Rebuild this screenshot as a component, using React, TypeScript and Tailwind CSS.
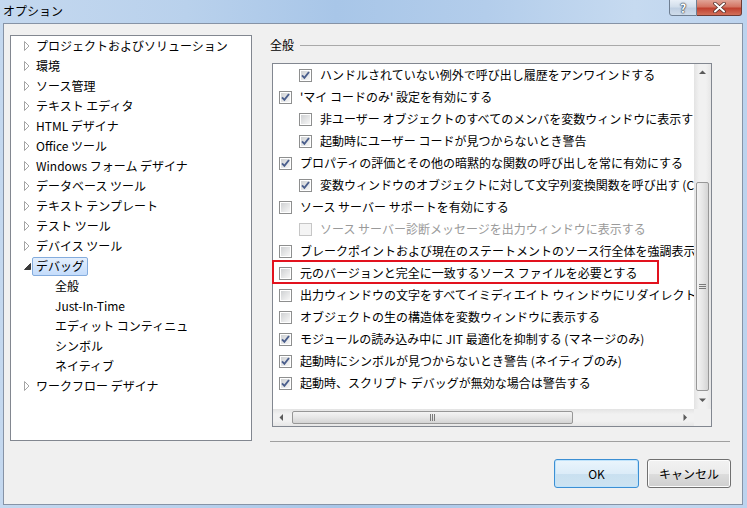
import React from 'react';

type Row = { level: number; checked: boolean; disabled?: boolean; text: string };

const rows: Row[] = [
  { level: 1, checked: true, text: 'ハンドルされていない例外で呼び出し履歴をアンワインドする' },
  { level: 0, checked: true, text: "'マイ コードのみ' 設定を有効にする" },
  { level: 1, checked: false, text: '非ユーザー オブジェクトのすべてのメンバを変数ウィンドウに表示する' },
  { level: 1, checked: true, text: '起動時にユーザー コードが見つからないとき警告' },
  { level: 0, checked: true, text: 'プロパティの評価とその他の暗黙的な関数の呼び出しを常に有効にする' },
  { level: 1, checked: true, text: '変数ウィンドウのオブジェクトに対して文字列変換関数を呼び出す (C# および JavaScript のみ)' },
  { level: 0, checked: false, text: 'ソース サーバー サポートを有効にする' },
  { level: 1, checked: false, disabled: true, text: 'ソース サーバー診断メッセージを出力ウィンドウに表示する' },
  { level: 0, checked: false, text: 'ブレークポイントおよび現在のステートメントのソース行全体を強調表示する' },
  { level: 0, checked: false, text: '元のバージョンと完全に一致するソース ファイルを必要とする' },
  { level: 0, checked: false, text: '出力ウィンドウの文字をすべてイミディエイト ウィンドウにリダイレクトする' },
  { level: 0, checked: false, text: 'オブジェクトの生の構造体を変数ウィンドウに表示する' },
  { level: 0, checked: true, text: 'モジュールの読み込み中に JIT 最適化を抑制する (マネージのみ)' },
  { level: 0, checked: true, text: '起動時にシンボルが見つからないとき警告 (ネイティブのみ)' },
  { level: 0, checked: true, text: '起動時、スクリプト デバッグが無効な場合は警告する' },
];

const topItems = [
  'プロジェクトおよびソリューション',
  '環境',
  'ソース管理',
  'テキスト エディタ',
  'HTML デザイナ',
  'Office ツール',
  'Windows フォーム デザイナ',
  'データベース ツール',
  'テキスト テンプレート',
  'テスト ツール',
  'デバイス ツール',
];

const debugChildren = ['全般', 'Just-In-Time', 'エディット コンティニュ', 'シンボル', 'ネイティブ'];

function Collapsed() {
  return (
    <svg width="6" height="10" viewBox="0 0 6 10">
      <path d="M0.5 0.5 L5 5 L0.5 9.5 Z" fill="#fff" stroke="#a5a5a5" />
    </svg>
  );
}

function Expanded() {
  return (
    <svg width="7" height="7" viewBox="0 0 7 7">
      <path d="M6.5 0.5 L6.5 6.5 L0.5 6.5 Z" fill="#3b3b3b" stroke="#3b3b3b" />
    </svg>
  );
}

function TreeRow({ label, expanded }: { label: string; expanded?: boolean }) {
  return (
    <div className="flex h-[20px] items-center pl-[13px]">
      <span className="flex w-[12px] items-center">{expanded ? <Expanded /> : <Collapsed />}</span>
      <span>{label}</span>
    </div>
  );
}

function CheckBox({ checked, disabled }: { checked: boolean; disabled?: boolean }) {
  return (
    <span
      className={`flex h-[13px] w-[13px] shrink-0 items-center justify-center border ${
        disabled ? 'border-[#c6c6c6] bg-[#f4f4f4]' : 'border-[#8e8f8f] bg-white'
      }`}
    >
      <span
        className={`flex h-[9px] w-[9px] items-center justify-center ${
          disabled ? 'bg-[#f4f4f4]' : 'bg-[linear-gradient(135deg,#cfd1d3,#f7f7f7)]'
        }`}
      >
        {checked && (
          <svg width="9" height="9" viewBox="0 0 9 9" className="overflow-visible">
            <path d="M1 4.3 L3.4 6.8 L8 1" fill="none" stroke="#4a5e8c" strokeWidth="1.9" />
          </svg>
        )}
      </span>
    </span>
  );
}

function ScrollArrow({ dir }: { dir: 'up' | 'down' | 'left' | 'right' }) {
  const d = {
    up: 'M0 4 L3.5 0.5 L7 4 Z',
    down: 'M0 0.5 L3.5 4 L7 0.5 Z',
    left: 'M4 0 L0.5 3.5 L4 7 Z',
    right: 'M0.5 0 L4 3.5 L0.5 7 Z',
  }[dir];
  const vertical = dir === 'up' || dir === 'down';
  return (
    <span className="flex h-[17px] w-[17px] shrink-0 items-center justify-center">
      <svg width={vertical ? 7 : 5} height={vertical ? 5 : 7} viewBox={vertical ? '0 0 7 5' : '0 0 5 7'}>
        <path d={d} fill="#5a5a5a" />
      </svg>
    </span>
  );
}

export default function App() {
  return (
    <div className="relative h-[508px] w-[747px] overflow-hidden bg-[linear-gradient(90deg,#c4d8ef,#b9d1ec_25%,#a8c6e8_45%,#b3cdeb_65%,#c6daf0_85%,#bcd3ee)] font-['Noto_Sans_CJK_JP',sans-serif] text-[12px] text-black">
      {/* タイトルバー */}
      <div className="flex h-[23px] items-center pl-[3px] pb-[2px] text-[12px]">オプション</div>
      <div className="absolute right-[5px] top-[-1px] flex">
        <div className="flex h-[17px] w-[28px] items-center justify-center rounded-bl-[3px] border border-[#6f7f92] bg-[linear-gradient(#e8eff7,#d2deeb_45%,#bfcfe2_55%,#cfdcea)]">
          <span className="text-[12px] font-bold leading-none text-white [text-shadow:0_0_1px_#2b3a4a,0_0_1px_#2b3a4a,0_0_2px_#2b3a4a]">?</span>
        </div>
        <div className="flex h-[17px] w-[45px] items-center justify-center rounded-br-[3px] border border-l-0 border-[#6e3a33] bg-[linear-gradient(#e1a497,#d47563_45%,#c0412f_55%,#d2705a)]">
          <svg width="13" height="11" viewBox="0 0 13 11">
            <path d="M2 1.5 L11 9.5 M11 1.5 L2 9.5" stroke="#4a2a25" strokeWidth="3.4" strokeLinecap="round" />
            <path d="M2 1.5 L11 9.5 M11 1.5 L2 9.5" stroke="#fff" strokeWidth="2" strokeLinecap="round" />
          </svg>
        </div>
      </div>

      {/* クライアント領域 */}
      <div className="ml-[3px] h-[482px] w-[740px] border border-[#8693a6] bg-[#f0f0f0]">
        <div className="flex items-start pl-[6px] pt-[11px]">
          {/* ツリー */}
          <div className="h-[406px] w-[242px] border border-[#828790] bg-white">
            {topItems.map((t) => (
              <TreeRow key={t} label={t} />
            ))}
            <div className="flex h-[20px] items-center pl-[13px]">
              <span className="flex w-[12px] items-center">
                <Expanded />
              </span>
              <span className="ml-[-4px] flex h-[19px] items-center rounded-[2px] border border-[#84acdd] bg-[linear-gradient(#e4effd,#c4dcfb)] px-[3px]">
                デバッグ
              </span>
            </div>
            {debugChildren.map((c) => (
              <div key={c} className="flex h-[20px] items-center pl-[44px]">
                {c}
              </div>
            ))}
            <TreeRow label="ワークフロー デザイナ" />
          </div>

          {/* 右側 */}
          <div className="ml-[18px] w-[460px]">
            <div className="mr-[10px] flex h-[20px] items-center gap-[6px]">
              <span>全般</span>
              <span className="h-px flex-1 bg-[#a9a9a9]" />
            </div>

            <div className="relative ml-[2px] mt-[8px] h-[364px] w-[440px] border border-[#828790] bg-white">
              <div className="flex h-[345px]">
                <div className="w-[421px] overflow-hidden whitespace-nowrap">
                  {rows.map((r, i) => (
                    <div
                      key={i}
                      className={`flex h-[22px] items-center gap-[8px] ${r.level ? 'pl-[26px]' : 'pl-[6px]'} ${
                        r.disabled ? 'text-[#9a9a9a]' : ''
                      }`}
                    >
                      <CheckBox checked={r.checked} disabled={r.disabled} />
                      <span>{r.text}</span>
                    </div>
                  ))}
                </div>
                {/* 縦スクロールバー */}
                <div className="flex w-[17px] flex-col bg-[linear-gradient(90deg,#e3e3e3,#f1f1f1_30%,#f1f1f1_70%,#e6e6e6)]">
                  <ScrollArrow dir="up" />
                  <div className="h-[101px]" />
                  <div className="mx-auto flex h-[209px] w-[13px] items-center justify-center rounded-[2px] border border-[#979797] bg-[linear-gradient(90deg,#f4f4f4,#e6e6e6_50%,#d4d4d4)]">
                    <span className="flex flex-col gap-[1px]">
                      <span className="h-px w-[7px] bg-[#7a7a7a]" />
                      <span className="h-px w-[7px] bg-[#7a7a7a]" />
                      <span className="h-px w-[7px] bg-[#7a7a7a]" />
                    </span>
                  </div>
                  <div className="flex-1" />
                  <ScrollArrow dir="down" />
                </div>
              </div>
              {/* 横スクロールバー */}
              <div className="flex h-[17px]">
                <div className="flex w-[421px] items-center bg-[linear-gradient(#e3e3e3,#f1f1f1_30%,#f1f1f1_70%,#e6e6e6)]">
                  <ScrollArrow dir="left" />
                  <div className="ml-[2px] flex h-[13px] w-[281px] items-center justify-center rounded-[2px] border border-[#979797] bg-[linear-gradient(#f4f4f4,#e6e6e6_50%,#d4d4d4)]">
                    <span className="flex gap-[1px]">
                      <span className="h-[7px] w-px bg-[#7a7a7a]" />
                      <span className="h-[7px] w-px bg-[#7a7a7a]" />
                      <span className="h-[7px] w-px bg-[#7a7a7a]" />
                    </span>
                  </div>
                  <div className="flex-1" />
                  <ScrollArrow dir="right" />
                </div>
                <div className="w-[17px] bg-[#f0f0f0]" />
              </div>

              {/* 強調枠 */}
              <div className="pointer-events-none absolute left-[-1px] top-[196px] h-[24px] w-[387px] border-[2.5px] border-[#e2121e]" />
            </div>

            <div className="mt-[14px] h-px bg-[#a0a0a0]" />
          </div>
        </div>

        {/* ボタン */}
        <div className="mt-[17px] flex justify-end gap-[8px] pr-[11px]">
          <button className="flex h-[29px] w-[85px] items-center justify-center rounded-[3px] border border-[#3c8fd3] bg-[linear-gradient(#eaf5fc,#dcecf8_50%,#c9e0f0_51%,#cde3f1)] shadow-[inset_0_0_0_1px_#bfe3fb]">
            OK
          </button>
          <button className="flex h-[29px] w-[84px] items-center justify-center rounded-[3px] border border-[#707070] bg-[linear-gradient(#f2f2f2,#ebebeb_50%,#dddddd_51%,#cfcfcf)] shadow-[inset_0_0_0_1px_#fcfcfc]">
            キャンセル
          </button>
        </div>
      </div>
    </div>
  );
}
